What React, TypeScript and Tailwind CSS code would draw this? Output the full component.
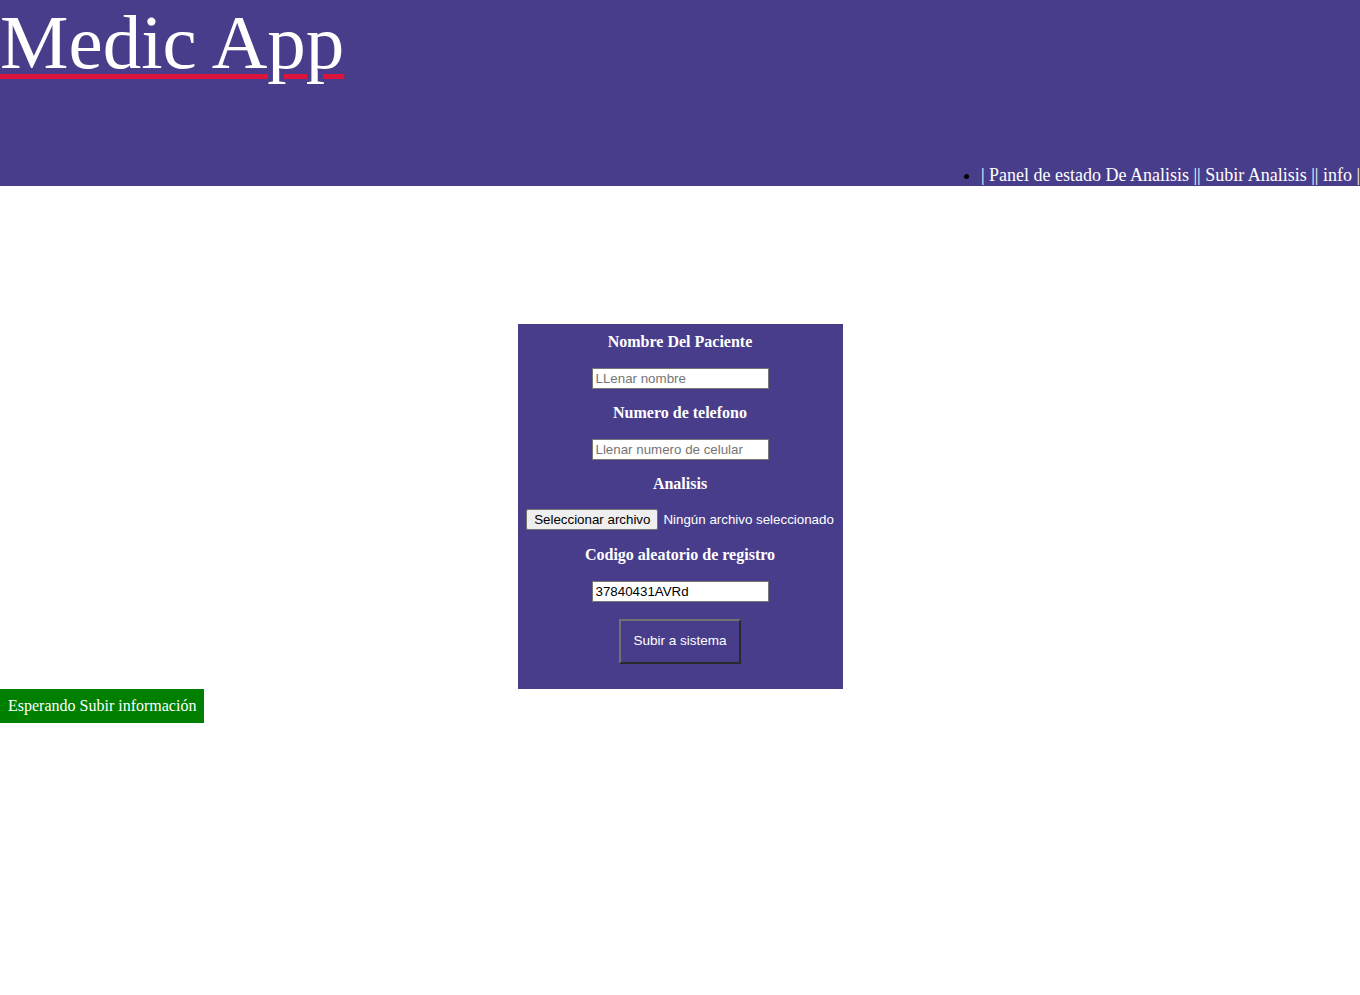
import React from "react";

const serif = "font-['Liberation_Serif','Times_New_Roman',serif]";
const sans = "font-['Liberation_Sans',Arial,sans-serif]";

function Label({ children }: { children: React.ReactNode }) {
  return (
    <div className={`${serif} h-[18px] leading-[20px] text-[16px] font-bold text-white text-center mb-[18px]`}>
      {children}
    </div>
  );
}

function TextInput({ placeholder, value }: { placeholder?: string; value?: string }) {
  return (
    <div className="flex justify-center mb-[14px]">
      <input
        type="text"
        placeholder={placeholder}
        defaultValue={value}
        className={`${sans} w-[177px] h-[21px] border border-[#767676] bg-white px-[3px] text-[13.33px] text-black placeholder:text-[#757575] outline-none`}
      />
    </div>
  );
}

export default function App() {
  return (
    <div className="min-h-[995px] bg-white">
      <header className="h-[186px] bg-[#483d8b] flex flex-col">
        <h1
          className={`${serif} text-[77px] leading-[84px] text-white font-normal underline decoration-[#dc143c] decoration-[5px] underline-offset-[6px] whitespace-nowrap`}
        >
          Medic App
        </h1>
        <nav className="mt-auto flex justify-end">
          <ul className="list-disc text-black">
            <li className={`${serif} text-[18px] leading-[21px] whitespace-nowrap`}>
              <span className="text-white">| Panel de estado De Analisis |</span>
              <span className="text-white">| Subir Analisis |</span>
              <span className="text-white">| info |</span>
            </li>
          </ul>
        </nav>
      </header>

      <div className="h-[138px]" />

      <div className="flex justify-center">
        <form className="w-[325px] bg-[#483d8b] pt-[8px] pb-[25px]" onSubmit={(e) => e.preventDefault()}>
          <Label>Nombre Del Paciente</Label>
          <TextInput placeholder="LLenar nombre" />
          <Label>Numero de telefono</Label>
          <TextInput placeholder="Llenar numero de celular" />
          <Label>Analisis</Label>
          <div className={`${sans} flex justify-center items-center gap-[5px] h-[21px] mb-[14px] text-[13.33px] -mt-[1px]`}>
            <button
              type="button"
              className="h-[21px] px-[7px] bg-[#efefef] border border-[#767676] rounded-[2px] text-black leading-none"
            >
              Seleccionar archivo
            </button>
            <span className="text-white">Ningún archivo seleccionado</span>
          </div>
          <div className="h-[1px]" />
          <Label>Codigo aleatorio de registro</Label>
          <TextInput value="37840431AVRd" />
          <div className="flex justify-center mt-[17px]">
            <button
              type="submit"
              className={`${sans} w-[122px] h-[45px] border-2 border-t-[#727272] border-l-[#727272] border-r-[#2a2a2a] border-b-[#2a2a2a] bg-[#483d8b] text-white text-[13.5px]`}
            >
              Subir a sistema
            </button>
          </div>
        </form>
      </div>

      <div className={`${serif} inline-block bg-[#008000] text-white text-[16px] leading-[18px] px-[8px] py-[8px]`}>
        Esperando Subir información
      </div>
    </div>
  );
}
